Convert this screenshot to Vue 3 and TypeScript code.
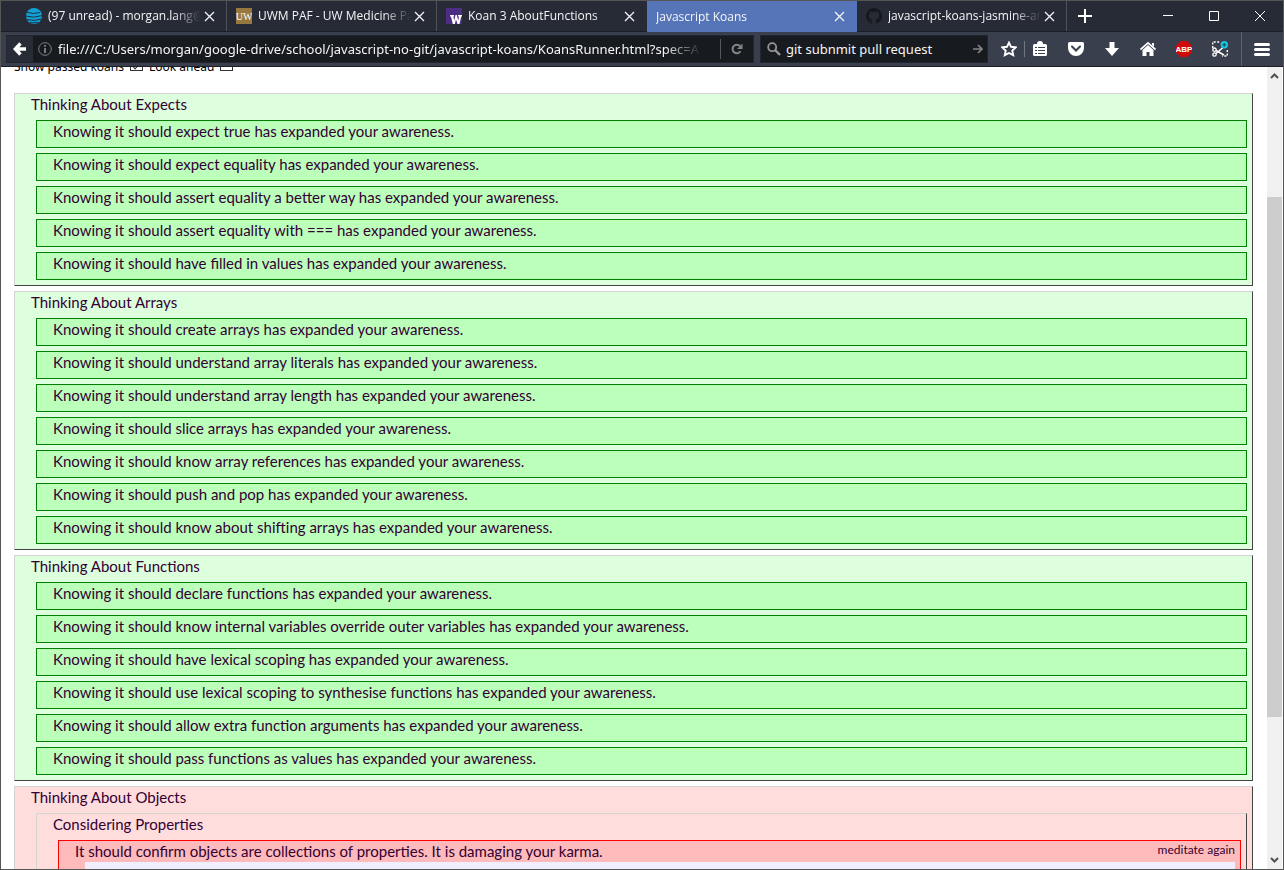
<script setup lang="ts">
import { ref } from 'vue'

interface Tab {
  title: string
  icon: 'att' | 'uwm' | 'uw' | 'github' | null
}

interface Suite {
  title: string
  koans: string[]
}

const tabs: Tab[] = [
  { title: '(97 unread) - morgan.lang@', icon: 'att' },
  { title: 'UWM PAF - UW Medicine Pa', icon: 'uwm' },
  { title: 'Koan 3 AboutFunctions', icon: 'uw' },
  { title: 'Javascript Koans', icon: null },
  { title: 'javascript-koans-jasmine-an', icon: 'github' },
]
const activeTab = ref(3)

const address = ref('file:///C:/Users/morgan/google-drive/school/javascript-no-git/javascript-koans/KoansRunner.html?spec=A')
const search = ref('git subnmit pull request')
const showPassed = ref(true)
const lookAhead = ref(false)

const suites: Suite[] = [
  {
    title: 'Thinking About Expects',
    koans: [
      'should expect true',
      'should expect equality',
      'should assert equality a better way',
      'should assert equality with ===',
      'should have filled in values',
    ],
  },
  {
    title: 'Thinking About Arrays',
    koans: [
      'should create arrays',
      'should understand array literals',
      'should understand array length',
      'should slice arrays',
      'should know array references',
      'should push and pop',
      'should know about shifting arrays',
    ],
  },
  {
    title: 'Thinking About Functions',
    koans: [
      'should declare functions',
      'should know internal variables override outer variables',
      'should have lexical scoping',
      'should use lexical scoping to synthesise functions',
      'should allow extra function arguments',
      'should pass functions as values',
    ],
  },
]
</script>

<template>
  <div class="window">
    <header class="tabstrip">
      <div v-for="(tab, i) in tabs" :key="tab.title" class="tab" :class="{ active: i === activeTab }">
        <svg v-if="tab.icon === 'att'" class="favicon" viewBox="0 0 16 16">
          <circle cx="8" cy="8" r="8" fill="#12a0d8" />
          <path d="M1 4.2q6 2.6 13 .2M0 8q7 2.6 16-.4M1 11.600q7 2 14-.6M4 14.600q4 .8 8-.4" fill="none" stroke="#22303d" stroke-width="1" />
        </svg>
        <svg v-else-if="tab.icon === 'uwm'" class="favicon" viewBox="0 0 16 16">
          <rect width="16" height="16" fill="#96793f" />
          <text x="8" y="12" text-anchor="middle" class="uwm-mark">UW</text>
        </svg>
        <svg v-else-if="tab.icon === 'uw'" class="favicon" viewBox="0 0 16 16">
          <rect width="16" height="16" fill="#4b2e83" />
          <path d="M4 7h4v1.500H7.300l.9 4 1.300-5.500h1.300l1.400 5.500.9-4H12V7h4v1.500h-.8L13.500 16h-2L10 11.500 8.800 16h-2L5 8.500H4z" fill="#fff" />
        </svg>
        <svg v-else-if="tab.icon === 'github'" class="favicon" viewBox="0 0 16 16">
          <path fill="#15181d" d="M8 0a8 8 0 0 0-2.530 15.590c.4.070.55-.17.55-.38v-1.490c-2.230.48-2.700-.95-2.700-.95-.36-.92-.89-1.170-.89-1.170-.73-.5.050-.49.050-.49.8.060 1.230.83 1.230.83.72 1.230 1.880.87 2.340.67.070-.52.280-.87.510-1.070-1.780-.2-3.640-.89-3.640-3.950 0-.87.310-1.590.82-2.150-.08-.2-.36-1.020.080-2.120 0 0 .67-.21 2.200.82a7.600 7.600 0 0 1 4 0c1.530-1.040 2.200-.82 2.200-.82.44 1.100.16 1.920.080 2.120.51.560.82 1.270.82 2.150 0 3.070-1.870 3.750-3.650 3.950.29.250.54.730.54 1.480v2.190c0 .21.150.46.550.38A8 8 0 0 0 8 0z" />
        </svg>
        <button class="tab-title" type="button" @click="activeTab = i">{{ tab.title }}</button>
        <button class="tab-close" type="button" aria-label="Close tab">
          <svg width="11" height="11" viewBox="0 0 11 11"><path d="M1 1l9 9M10 1l-9 9" stroke="currentColor" stroke-width="1.300" /></svg>
        </button>
      </div>
      <button class="new-tab" type="button" aria-label="New tab">
        <svg width="14" height="14" viewBox="0 0 14 14"><path d="M7 0v14M0 7h14" stroke="#fff" stroke-width="2" /></svg>
      </button>
      <div class="window-controls">
        <button type="button" aria-label="Minimize"><svg width="10" height="10" viewBox="0 0 10 10"><path d="M0 4.500h10" stroke="#fff" /></svg></button>
        <button type="button" aria-label="Maximize"><svg width="10" height="10" viewBox="0 0 10 10"><path d="M.5.5h9v9h-9z" fill="none" stroke="#fff" /></svg></button>
        <button type="button" aria-label="Close"><svg width="10" height="10" viewBox="0 0 10 10"><path d="M0 0l10 10M10 0L0 10" stroke="#fff" /></svg></button>
      </div>
    </header>

    <nav class="toolbar">
      <div class="field url">
        <button class="back" type="button" aria-label="Back">
          <svg width="14" height="14" viewBox="0 0 14 14"><path d="M7.500 1.500L2.300 7l5.200 5.500M3 7h10" fill="none" stroke="#fff" stroke-width="3.400" /></svg>
        </button>
        <svg class="info" width="14" height="14" viewBox="0 0 14 14">
          <circle cx="7" cy="7" r="6.300" fill="none" stroke="#7e8084" />
          <path d="M7 3v1.700M7 6v5" stroke="#909296" stroke-width="1.600" />
        </svg>
        <input v-model="address" class="address" type="text" aria-label="Address" spellcheck="false" />
        <span class="field-divider"></span>
        <button class="reload" type="button" aria-label="Reload">
          <svg width="12" height="12" viewBox="0 0 12 12"><path d="M9.500 8.300A4.300 4.300 0 1 1 9 3" fill="none" stroke="#858585" stroke-width="2" /><path d="M11.500.500V6H6z" fill="#858585" /></svg>
        </button>
      </div>
      <div class="field search">
        <svg width="14" height="14" viewBox="0 0 14 14"><circle cx="5.200" cy="5.200" r="4" fill="none" stroke="#959595" stroke-width="1.800" /><path d="M8 8l5 5" stroke="#959595" stroke-width="2.400" /></svg>
        <input v-model="search" type="text" aria-label="Search" spellcheck="false" />
        <button type="button" aria-label="Go">
          <svg width="10" height="10" viewBox="0 0 10 10"><path d="M0 5h8M5 1l4 4-4 4" fill="none" stroke="#858585" stroke-width="1.700" /></svg>
        </button>
      </div>
      <button class="tool star" type="button" aria-label="Bookmark">
        <svg width="16" height="16" viewBox="0 0 16 16"><path d="M8 1.600l2 4.200 4.700.6-3.400 3.200.9 4.600L8 12l-4.200 2.200.9-4.600L1.300 6.400 6 5.800z" fill="none" stroke="#fff" stroke-width="1.900" /></svg>
      </button>
      <span class="tool-divider"></span>
      <button class="tool list" type="button" aria-label="Bookmarks list">
        <svg width="14" height="16" viewBox="0 0 14 16"><path d="M4 3a3 3 0 0 1 6 0h2.500A1.500 1.500 0 0 1 14 4.500v9a1.500 1.500 0 0 1-1.500 1.500h-11A1.500 1.500 0 0 1 0 13.500v-9A1.500 1.500 0 0 1 1.500 3z" fill="#fff" /><path d="M2 6.500h2M5 6.500h7M2 9.500h2M5 9.500h7M2 12.500h2M5 12.500h7" stroke="#393f4d" /></svg>
      </button>
      <button class="tool" type="button" aria-label="Pocket">
        <svg width="16" height="14" viewBox="0 0 16 14"><path d="M1.500 0h13A1.500 1.500 0 0 1 16 1.500V6A8 8 0 0 1 0 6V1.500A1.500 1.500 0 0 1 1.500 0z" fill="#fff" /><path d="M4 4.500l4 4 4-4" fill="none" stroke="#393f4d" stroke-width="2" stroke-linecap="round" /></svg>
      </button>
      <button class="tool" type="button" aria-label="Downloads">
        <svg width="14" height="14" viewBox="0 0 14 14"><path d="M4.500 0h5v6H14l-7 8-7-8h4.500z" fill="#fff" /></svg>
      </button>
      <button class="tool" type="button" aria-label="Home">
        <svg width="16" height="14" viewBox="0 0 16 14"><path d="M.5 7.500L8 .9l7.500 6.600" fill="none" stroke="#fff" stroke-width="1.700" /><path d="M12 1h2v4l-2-2zM8 3l5.500 5v6h-4v-4h-3v4h-4V8z" fill="#fff" /></svg>
      </button>
      <button class="tool" type="button" aria-label="Adblock Plus">
        <svg width="16" height="16" viewBox="0 0 16 16"><path d="M4.700 0h6.600L16 4.700v6.600L11.300 16H4.700L0 11.300V4.700z" fill="#cf0a0a" /><text x="8" y="11" text-anchor="middle" class="abp-mark">ABP</text></svg>
      </button>
      <button class="tool" type="button" aria-label="Screen clip">
        <svg width="16" height="16" viewBox="0 0 16 16"><path d="M.7 7V1H8M15.300 9v6H10" fill="none" stroke="#fff" stroke-width="1.400" stroke-dasharray="2 1.500" /><path d="M4 9.500l8 4.500M4 12.500l7-6" stroke="#fff" stroke-width="1.600" /><circle cx="2.500" cy="8.700" r="1.700" fill="none" stroke="#fff" stroke-width="1.300" /><circle cx="2.500" cy="13.500" r="1.700" fill="none" stroke="#fff" stroke-width="1.300" /><circle cx="12.300" cy="3.800" r="3.700" fill="#16c7df" /><path d="M12.300 2v3.600M10.500 3.800h3.600" stroke="#174f66" stroke-width="1.300" /></svg>
      </button>
      <button class="tool menu" type="button" aria-label="Menu">
        <svg width="16" height="13" viewBox="0 0 16 13"><path d="M1.500 1.500h13M1.500 6.500h13M1.500 11.500h13" stroke="#fff" stroke-width="3" stroke-linecap="round" /></svg>
      </button>
    </nav>

    <div class="viewport">
      <main class="page">
        <div class="options">
          <label for="show-passed">Show passed koans</label>
          <input id="show-passed" v-model="showPassed" type="checkbox" />
          <label for="look-ahead">Look ahead</label>
          <input id="look-ahead" v-model="lookAhead" type="checkbox" />
        </div>

        <section v-for="suite in suites" :key="suite.title" class="suite passed">
          <a class="title" href="#">{{ suite.title }}</a>
          <div v-for="koan in suite.koans" :key="koan" class="koan">
            <a class="title" href="#">Knowing it {{ koan }} has expanded your awareness.</a>
          </div>
        </section>

        <section class="suite failed">
          <a class="title" href="#">Thinking About Objects</a>
          <section class="suite failed nested">
            <a class="title" href="#">Considering Properties</a>
            <div class="koan">
              <div class="koan-head">
                <a class="title" href="#">It should confirm objects are collections of properties. It is damaging your karma.</a>
                <a class="again" href="#">meditate again</a>
              </div>
              <div class="messages"></div>
            </div>
          </section>
        </section>
      </main>

      <div class="scrollbar">
        <svg width="9" height="6" viewBox="0 0 9 6"><path d="M1 5l3.500-3.500L8 5" fill="none" stroke="#505050" stroke-width="2" /></svg>
        <div class="track"><div class="thumb"></div></div>
        <svg width="9" height="6" viewBox="0 0 9 6"><path d="M1 1l3.500 3.500L8 1" fill="none" stroke="#505050" stroke-width="2" /></svg>
      </div>
    </div>
  </div>
</template>

<style>
body {
  margin: 0;
}
</style>

<style scoped>
* {
  box-sizing: border-box;
}

button {
  display: flex;
  align-items: center;
  justify-content: center;
  padding: 0;
  border: 0;
  background: none;
  color: #f4f5f7;
  font: inherit;
}

svg {
  display: block;
  flex: none;
}

.window {
  display: flex;
  flex-direction: column;
  height: 100vh;
  overflow: hidden;
  border: 1px solid #555;
  background: #fff;
  font-family: "Open Sans", "Noto Sans", sans-serif;
  font-size: 12px;
}

.tabstrip {
  display: flex;
  flex: none;
  height: 31px;
  padding-left: 16px;
  background: #272b35;
  border-bottom: 1px solid #1b1e26;
}

.tab {
  display: flex;
  align-items: center;
  width: 210px;
  padding: 0 11px 0 9px;
  border-right: 1px solid #4e525b;
  color: #f4f5f7;
}

.tab.active {
  height: 31px;
  background: #5675b9;
  border-right-color: #5675b9;
}

.tab:has(+ .active) {
  border-right-color: #272b35;
}

.favicon {
  width: 16px;
  height: 16px;
  margin-right: 6px;
}

.uwm-mark {
  fill: #fff;
  font: 10px "Liberation Serif", serif;
}

.tab-title {
  flex: 1;
  justify-content: flex-start;
  min-width: 0;
  margin-right: 3px;
  overflow: hidden;
  white-space: nowrap;
  line-height: 20px;
  mask-image: linear-gradient(to right, #000 calc(100% - 28px), transparent);
}

.new-tab {
  width: 36px;
}

.window-controls {
  display: flex;
  margin-left: auto;
}

.window-controls button {
  width: 46px;
}

.toolbar {
  display: flex;
  align-items: center;
  flex: none;
  height: 35px;
  padding-left: 5px;
  background: #393f4d;
  border-bottom: 1px solid #1b1e26;
}

.field {
  display: flex;
  align-items: center;
  height: 28px;
  margin-right: 6px;
  border: 1px solid #22262e;
  background: #171b1f;
  font-family: "Noto Sans", "Open Sans", sans-serif;
  font-size: 13px;
}

.field input {
  flex: 1;
  min-width: 0;
  padding: 0;
  border: 0;
  outline: 0;
  background: none;
  color: #f5f5f5;
  font: inherit;
}

.url {
  flex: 1;
}

.back {
  width: 26px;
  height: 26px;
  margin-right: 5px;
  background: #272c37;
}

.info {
  margin-right: 6px;
}

.field .address {
  mask-image: linear-gradient(to right, #000 calc(100% - 56px), transparent calc(100% - 18px));
}

.field-divider {
  width: 1px;
  height: 20px;
  background: #555960;
}

.reload {
  width: 32px;
  height: 26px;
}

.search {
  width: 228px;
  padding: 0 4px 0 6px;
}

.search input {
  margin-left: 5px;
}

.tool {
  width: 36px;
  height: 34px;
}

.star {
  width: 30px;
}

.tool-divider {
  width: 1px;
  height: 16px;
  background: #737782;
}

.list {
  width: 33px;
  padding-right: 3px;
}

.abp-mark {
  fill: #fff;
  font: bold 8px "Liberation Sans", sans-serif;
}

.menu {
  width: 42px;
  margin-left: 3px;
  padding-right: 2px;
  border-left: 1px solid #5d6270;
}

.viewport {
  display: flex;
  flex: 1;
  min-height: 0;
}

.page {
  flex: 1;
  min-width: 0;
  overflow: hidden;
  padding: 0 14px 0 13px;
  color: #303;
  font-family: Lato, "Open Sans", sans-serif;
  font-size: 15px;
}

.options {
  display: flex;
  align-items: center;
  height: 20px;
  margin: -11px 0 17px;
  color: #000;
  font-family: "Noto Sans", sans-serif;
  font-size: 12px;
}

.options input {
  appearance: none;
  display: grid;
  place-items: center;
  width: 13px;
  height: 13px;
  margin: 0 6px 4px;
  border: 1px solid #333;
  background: #fff;
}

.options input:checked::after {
  content: "";
  width: 4px;
  height: 8px;
  border: solid #333;
  border-width: 0 1px 1px 0;
  transform: rotate(45deg);
}

a {
  color: inherit;
  text-decoration: none;
}

.suite {
  margin-bottom: 5px;
  border: 1px solid;
  border-color: #d3d3d3 #444 #444 #d3d3d3;
}

.passed {
  background: #dfd;
}

.failed {
  background: #fdd;
}

.title {
  display: block;
  padding: 0 0 6px 16px;
  line-height: 20px;
}

.koan,
.nested {
  margin: 0 5px 5px 21px;
}

.koan {
  border: 1px solid green;
  background: #bfb;
}

.failed .koan {
  border-color: red;
  background: #fbb;
}

.koan-head {
  display: flex;
  justify-content: space-between;
  height: 21px;
}

.again {
  padding-right: 5px;
  font-size: 12px;
  line-height: 18px;
}

.messages {
  height: 80px;
  margin: 0 5px 5px 26px;
  background: #eef;
}

.scrollbar {
  display: flex;
  flex-direction: column;
  align-items: center;
  width: 15px;
  margin-right: 1px;
  padding: 6px 0;
  background: #f0f0f0;
}

.track {
  flex: 1;
  align-self: stretch;
  padding: 118px 0 140px;
}

.thumb {
  height: 100%;
  background: #cdcdcd;
}
</style>
